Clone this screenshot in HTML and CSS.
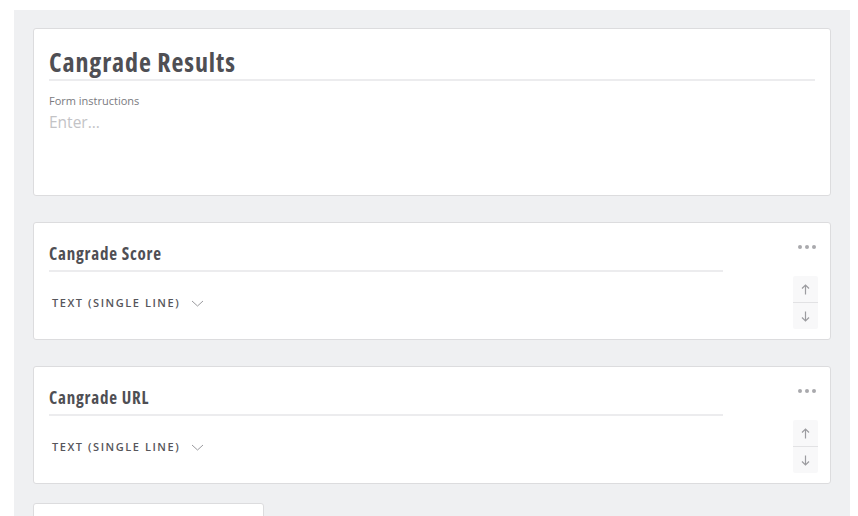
FILE: index.html
```html
<!DOCTYPE html>
<html>
<head>
<meta charset="utf-8">
<link rel="stylesheet" href="styles.css">
</head>
<body>
<div class="page">
  <section class="card form-card">
    <h1 class="form-title">Cangrade Results</h1>
    <div class="instr-label">Form instructions</div>
    <div class="instr-input">Enter...</div>
  </section>

  <section class="card field-card">
    <div class="field-main">
      <h2 class="field-title">Cangrade Score</h2>
      <div class="field-type">TEXT (SINGLE LINE)
        <svg class="chev" width="13" height="7" viewBox="0 0 13 7"><path d="M1 1l5.5 5L12 1" fill="none" stroke="#9a9a9e" stroke-width="1"/></svg>
      </div>
    </div>
    <div class="field-actions">
      <div class="dots"><span></span><span></span><span></span></div>
      <div class="mover">
        <div class="mv">
          <svg width="9" height="11" viewBox="0 0 9 11"><path d="M4.5 10.5V1M1 4.5l3.5-3.5 3.5 3.5" fill="none" stroke="#9c9ca0" stroke-width="1.2"/></svg>
        </div>
        <div class="mv">
          <svg width="9" height="11" viewBox="0 0 9 11"><path d="M4.5 0.5V10M1 6.5l3.5 3.5 3.5-3.5" fill="none" stroke="#9c9ca0" stroke-width="1.2"/></svg>
        </div>
      </div>
    </div>
  </section>

  <section class="card field-card">
    <div class="field-main">
      <h2 class="field-title">Cangrade URL</h2>
      <div class="field-type">TEXT (SINGLE LINE)
        <svg class="chev" width="13" height="7" viewBox="0 0 13 7"><path d="M1 1l5.5 5L12 1" fill="none" stroke="#9a9a9e" stroke-width="1"/></svg>
      </div>
    </div>
    <div class="field-actions">
      <div class="dots"><span></span><span></span><span></span></div>
      <div class="mover">
        <div class="mv">
          <svg width="9" height="11" viewBox="0 0 9 11"><path d="M4.5 10.5V1M1 4.5l3.5-3.5 3.5 3.5" fill="none" stroke="#9c9ca0" stroke-width="1.2"/></svg>
        </div>
        <div class="mv">
          <svg width="9" height="11" viewBox="0 0 9 11"><path d="M4.5 0.5V10M1 6.5l3.5 3.5 3.5-3.5" fill="none" stroke="#9c9ca0" stroke-width="1.2"/></svg>
        </div>
      </div>
    </div>
  </section>

  <div class="add-stub"></div>
</div>
</body>
</html>
```

FILE: styles.css
```css
html, body {
  margin: 0;
  padding: 0;
  background: #ffffff;
  height: 100%;
  overflow: hidden;
}
body {
  font-family: "Open Sans", "Liberation Sans", sans-serif;
  color: #505055;
}
.page {
  margin: 10px 0 0 14px;
  width: 836px;
  height: 506px;
  background: #eff0f2;
  padding: 18px 19px 0 19px;
  box-sizing: border-box;
  display: flex;
  flex-direction: column;
  gap: 26px;
}
.card {
  background: #ffffff;
  border: 1px solid #dcdcde;
  border-radius: 3px;
  box-sizing: border-box;
  flex: none;
}
.form-card {
  height: 168px;
  padding: 17px 15px 0 15px;
}
.form-title {
  margin: 0;
  font-family: "Open Sans", "DejaVu Sans", sans-serif;
  font-stretch: condensed;
  font-size: 26px;
  line-height: 32px;
  font-weight: 700;
  letter-spacing: 0.9px;
  color: #4f4f54;
  padding-bottom: 1px;
  border-bottom: 2px solid #ececee;
}
.instr-label {
  margin-top: 12px;
  font-family: "Open Sans", "Liberation Sans", sans-serif;
  font-size: 11px;
  line-height: 15px;
  color: #7a7a7e;
}
.instr-input {
  margin-top: 4px;
  font-family: "Open Sans", "Liberation Sans", sans-serif;
  font-size: 15.5px;
  line-height: 20px;
  color: #c3c3c6;
}
.field-card {
  height: 118px;
  display: flex;
  padding: 0 12px 0 15px;
}
.field-main {
  width: 674px;
  padding-top: 19px;
}
.field-title {
  margin: 0;
  font-family: "Open Sans", "DejaVu Sans", sans-serif;
  font-stretch: condensed;
  font-size: 17px;
  line-height: 24px;
  font-weight: 700;
  letter-spacing: 0.8px;
  color: #4f4f54;
  padding-bottom: 4px;
  border-bottom: 2px solid #ececee;
}
.field-type {
  margin-top: 23px;
  padding-left: 3px;
  font-family: "Open Sans", "Liberation Sans", sans-serif;
  font-size: 11px;
  font-weight: 600;
  letter-spacing: 1.55px;
  color: #56565b;
  display: flex;
  align-items: center;
  gap: 11px;
}
.chev { margin-top: 1px; }
.field-actions {
  margin-left: auto;
  width: 25px;
  display: flex;
  flex-direction: column;
  align-items: flex-end;
  padding-top: 21px;
}
.dots {
  display: flex;
  gap: 3px;
  height: 5px;
  align-items: center;
  margin-right: 2px;
}
.dots span {
  width: 4px;
  height: 4px;
  border-radius: 50%;
  background: #a9a9ad;
}
.mover {
  margin-top: 27px;
  width: 25px;
  background: #f8f8f9;
  border-radius: 2px;
}
.mv {
  height: 26px;
  display: flex;
  align-items: center;
  justify-content: center;
}
.mv + .mv {
  border-top: 1px solid #e2e2e4;
}
.add-stub {
  margin-top: -7px;
  width: 229px;
  height: 20px;
  background: #ffffff;
  border: 1px solid #dcdcde;
  border-radius: 3px;
  flex: none;
}
```
